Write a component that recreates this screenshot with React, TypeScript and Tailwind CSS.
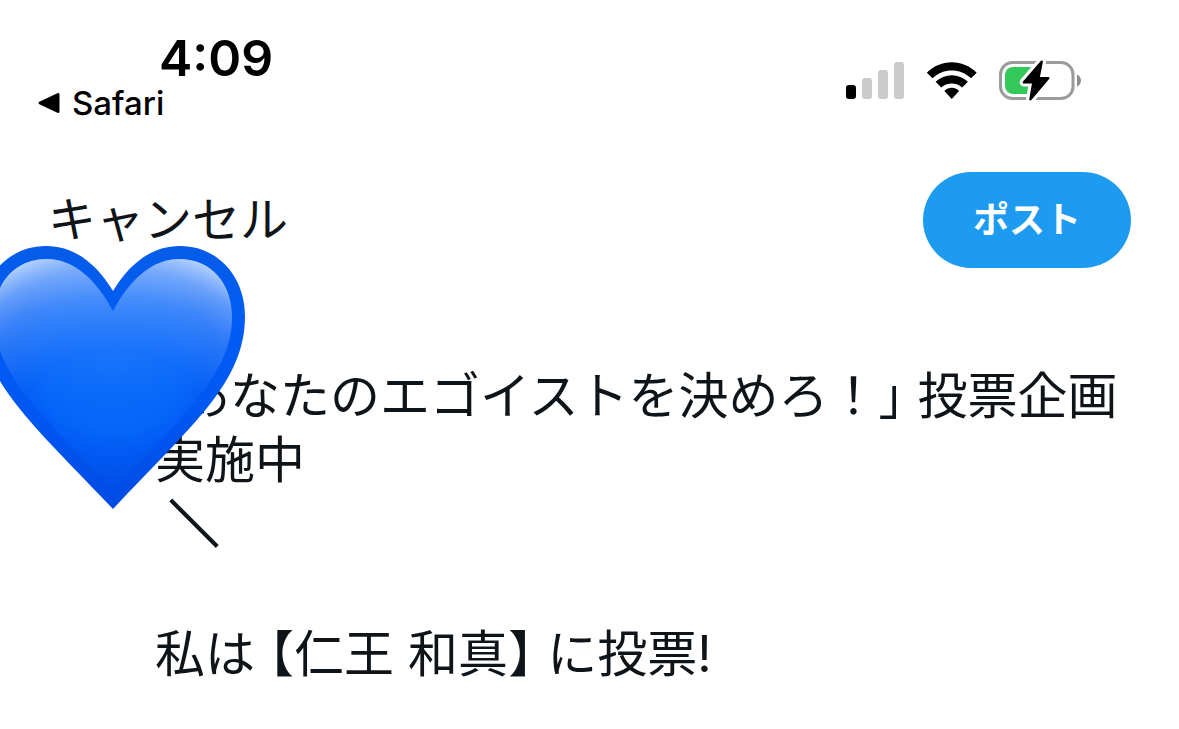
import React from "react";

function SignalIcon() {
  return (
    <svg width="59" height="38" viewBox="0 0 59 38" aria-hidden="true">
      <rect x="0" y="23" width="10" height="14" rx="3" fill="#000" />
      <rect x="16" y="16" width="10" height="21" rx="3" fill="#cbcbcb" />
      <rect x="32" y="8" width="10" height="29" rx="3" fill="#cbcbcb" />
      <rect x="48" y="0" width="10" height="37" rx="3" fill="#cbcbcb" />
    </svg>
  );
}

function WifiIcon() {
  return (
    <svg width="52" height="38" viewBox="0 0 52 38" aria-hidden="true">
      <path d="M0.8 10.8 C14.5 -3.2 37 -3.2 50.7 10.8 L45 16.3 C34.5 5.8 17 5.8 6.5 16.3 Z" fill="#000" />
      <path d="M9.6 19.7 C18.6 11 33 11 41.9 19.7 L36.2 25.5 C30.5 20 21 20 15.3 25.5 Z" fill="#000" />
      <path d="M18.4 28.9 C22.7 24.6 28.8 24.6 33.1 28.9 L25.75 37 Z" fill="#000" />
    </svg>
  );
}

function BatteryIcon() {
  const bolt = "M42.8 1.5 L24.8 22.3 H34.3 L31.3 39.5 L49.5 18 H39.6 Z";
  return (
    <svg width="84" height="42" viewBox="0 0 84 42" aria-hidden="true">
      <rect x="1.5" y="2.5" width="72.5" height="36" rx="12" fill="none" stroke="#9b9b9b" strokeWidth="3" />
      <path d="M78 14.5 C83.3 16.8 83.3 24.2 78 26.5 Z" fill="#8d8d8d" />
      <rect x="6" y="7" width="32" height="27" rx="8" fill="#34c759" />
      <path d={bolt} fill="#fff" stroke="#fff" strokeWidth="8.5" strokeLinejoin="round" />
      <path d={bolt} fill="#000" stroke="#000" strokeWidth="2.2" strokeLinejoin="round" />
    </svg>
  );
}

function BlueHeart() {
  const outer =
    "M132 45 C149 17 171 0 199 0 C237 0 264 31 264 70 C264 136 212 178 132 263 C52 178 0 136 0 70 C0 31 27 0 65 0 C93 0 115 17 132 45 Z";
  const inner =
    "M132 65 C149 33 172 13 198 13 C231 13 251 38 251 71 C251 126 206 166 132 245 C58 166 13 126 13 71 C13 38 33 13 66 13 C92 13 115 33 132 65 Z";
  return (
    <svg width="264" height="264" viewBox="0 0 264 264" role="img" aria-label="青いハート">
      <defs>
        <linearGradient id="body" x1="0" y1="0" x2="0" y2="1">
          <stop offset="0" stopColor="#055ce8" />
          <stop offset="0.3" stopColor="#005cf4" />
          <stop offset="0.6" stopColor="#0058f2" />
          <stop offset="1" stopColor="#004be4" />
        </linearGradient>
        <radialGradient id="glow" gradientUnits="userSpaceOnUse" cx="132" cy="110" r="135">
          <stop offset="0" stopColor="#0c6dfa" />
          <stop offset="0.55" stopColor="#0566fa" />
          <stop offset="1" stopColor="#0058f2" stopOpacity="0" />
        </radialGradient>
        <linearGradient id="sheen" gradientUnits="userSpaceOnUse" x1="0" y1="13" x2="0" y2="160">
          <stop offset="0" stopColor="#c4dcff" stopOpacity="0.6" />
          <stop offset="0.35" stopColor="#78abfc" stopOpacity="0.35" />
          <stop offset="1" stopColor="#2a7cfb" stopOpacity="0" />
        </linearGradient>
        <radialGradient id="shine" gradientUnits="userSpaceOnUse" cx="132" cy="205" r="210">
          <stop offset="0.5" stopColor="#4a8ffa" stopOpacity="0" />
          <stop offset="0.75" stopColor="#6ba2fb" stopOpacity="0.28" />
          <stop offset="0.88" stopColor="#8fb8fd" stopOpacity="0.5" />
          <stop offset="1" stopColor="#c8deff" stopOpacity="0.85" />
        </radialGradient>
      </defs>
      <path d={outer} fill="url(#body)" />
      <path d={inner} fill="url(#glow)" />
      <path d={inner} fill="url(#sheen)" />
      <path d={inner} fill="url(#shine)" />
    </svg>
  );
}

export default function App() {
  return (
    <div className="relative min-h-screen overflow-hidden bg-white font-['Inter','Noto_Sans_CJK_JP',sans-serif] text-[#0f1419]">
      <header className="flex items-start justify-between pt-8 pr-24 pl-9 text-black">
        <div>
          <div className="pl-[123px] text-[50px] leading-[52px] font-semibold">4:09</div>
          <a href="#safari" className="flex items-center gap-3 text-[33px] leading-[38px] font-medium">
            <svg width="24" height="22" viewBox="0 0 24 22" aria-hidden="true">
              <path d="M4 11 L22 2.5 V19.5 Z" fill="#000" stroke="#000" strokeWidth="3" strokeLinejoin="round" />
            </svg>
            Safari
          </a>
        </div>
        <div className="flex items-center gap-[21px] pt-7">
          <SignalIcon />
          <WifiIcon />
          <BatteryIcon />
        </div>
      </header>

      <nav className="mt-[50px] flex items-center justify-between pr-12 pl-12">
        <button type="button" className="text-[48px] leading-[64px]">
          キャンセル
        </button>
        <button
          type="button"
          className="h-24 rounded-full bg-[#1d9bf0] px-[50px] text-[36px] leading-[48px] font-bold text-white"
        >
          ポスト
        </button>
      </nav>

      <main className="mt-24 pr-10 pb-8 pl-[155px] text-[50px] leading-[64px]">
        <p>
          <span className="[font-feature-settings:'halt']">「</span>
          あなたのエゴイストを決めろ！
          <span className="[font-feature-settings:'halt']">」</span> 投票企画
          <br />
          実施中
          <br />
          <span className="[-webkit-text-stroke:2px_#0f1419]">{"\u00a0＼"}</span>
        </p>
        <p className="mt-[66px]">
          私は <span className="[font-feature-settings:'halt']">【</span>仁王 和真
          <span className="[font-feature-settings:'halt']">】</span> に投票!
        </p>
      </main>

      <div className="absolute top-[246px] -left-[19px]">
        <BlueHeart />
      </div>
    </div>
  );
}
